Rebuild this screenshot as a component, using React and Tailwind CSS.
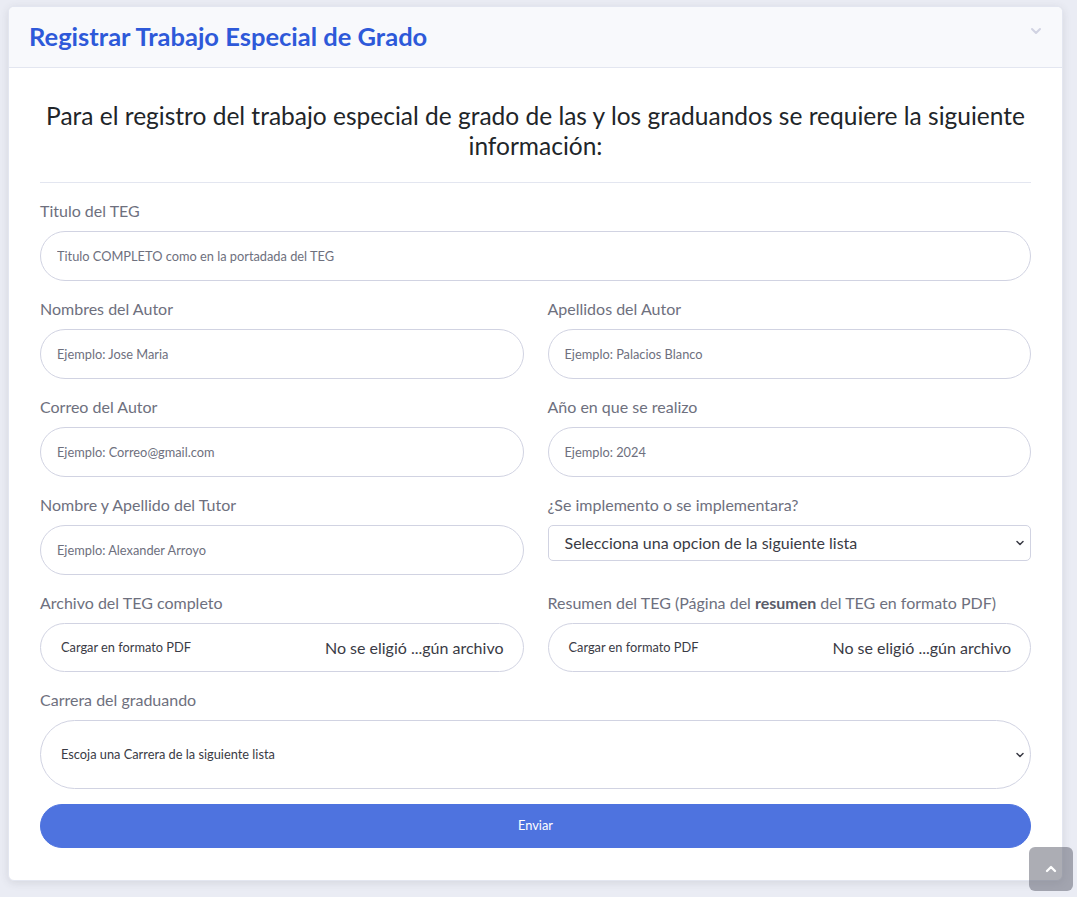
import { ChevronDown, ChevronUp } from 'lucide-react';

const font = { fontFamily: 'Lato, "Open Sans", Arial, sans-serif' };

const Label = ({ children }) => (
    <label className="block mb-2 text-base leading-6 text-[#6e707e]">{children}</label>
);

const TextInput = ({ placeholder }) => (
    <input
        type="text"
        placeholder={placeholder}
        className="block w-full h-[50px] px-4 rounded-full border border-[#d1d3e2] bg-white text-[12.8px] text-[#6e707e] placeholder:text-[#6e707e] outline-none"
    />
);

const FileInput = ({ label }) => (
    <div className="flex items-center justify-between h-[49px] pl-5 pr-[19px] rounded-full border border-[#d1d3e2] bg-white">
        <span className="text-[12.8px] text-[#3a3b45]">{label}</span>
        <span className="text-base text-[#3a3b45]">No se eligió ...gún archivo</span>
    </div>
);

const Field = ({ label, children }) => (
    <div className="mb-4">
        <Label>{label}</Label>
        {children}
    </div>
);

export default function App() {
    return (
        <div className="min-h-screen bg-[#eaecf4] pt-[6px] pb-4 pl-2 pr-[14px]" style={font}>
            <div className="bg-white rounded-[6px] border border-[#e3e6f0] shadow-[0_2px_8px_rgba(58,59,69,0.12)] overflow-hidden">
                <div className="flex items-center justify-between h-[61px] px-5 bg-[#f8f9fc] border-b border-[#e3e6f0]">
                    <h6 className="text-[25.5px] font-bold text-[#2e59d9] leading-none">Registrar Trabajo Especial de Grado</h6>
                    <ChevronDown className="w-4 h-4 text-[#d1d3e2] -mt-3 mr-[-2px]" strokeWidth={3} />
                </div>

                <div className="px-[31px] pt-[33px] pb-8">
                    <h4 className="text-center text-[24.5px] leading-[30px] text-[#212529]">
                        Para el registro del trabajo especial de grado de las y los graduandos se requiere la siguiente información:
                    </h4>
                    <hr className="mt-[21px] mb-4 border-t border-[#e3e6f0]" />

                    <Field label="Titulo del TEG">
                        <TextInput placeholder="Titulo COMPLETO como en la portadada del TEG" />
                    </Field>

                    <div className="grid grid-cols-2 gap-x-6">
                        <Field label="Nombres del Autor">
                            <TextInput placeholder="Ejemplo: Jose Maria" />
                        </Field>
                        <Field label="Apellidos del Autor">
                            <TextInput placeholder="Ejemplo: Palacios Blanco" />
                        </Field>
                        <Field label="Correo del Autor">
                            <TextInput placeholder="Ejemplo: Correo@gmail.com" />
                        </Field>
                        <Field label="Año en que se realizo">
                            <TextInput placeholder="Ejemplo: 2024" />
                        </Field>
                        <Field label="Nombre y Apellido del Tutor">
                            <TextInput placeholder="Ejemplo: Alexander Arroyo" />
                        </Field>
                        <Field label="¿Se implemento o se implementara?">
                            <div className="relative">
                                <div className="flex items-center h-[36px] pl-4 pr-8 rounded-[5px] border border-[#d1d3e2] bg-white text-base text-[#3a3b45]">
                                    Selecciona una opcion de la siguiente lista
                                </div>
                                <ChevronDown className="absolute right-[5px] top-[12px] w-3 h-3 text-[#3a3b45]" strokeWidth={3} />
                            </div>
                        </Field>
                        <Field label="Archivo del TEG completo">
                            <FileInput label="Cargar en formato PDF" />
                        </Field>
                        <Field label={<>Resumen del TEG (Página del <b className="text-[#5a5c69]">resumen</b> del TEG en formato PDF)</>}>
                            <FileInput label="Cargar en formato PDF" />
                        </Field>
                    </div>

                    <Field label="Carrera del graduando">
                        <div className="relative">
                            <div className="flex items-center h-[69px] pl-5 pr-8 rounded-full border border-[#d1d3e2] bg-white text-[12.8px] text-[#3a3b45]">
                                Escoja una Carrera de la siguiente lista
                            </div>
                            <ChevronDown className="absolute right-[5px] top-[29px] w-3 h-3 text-[#3a3b45]" strokeWidth={3} />
                        </div>
                    </Field>

                    <button className="block w-full h-[44px] -mt-px rounded-full bg-[#4e73df] border border-[#4e73df] text-white text-[12.8px]">
                        Enviar
                    </button>
                </div>
            </div>

            <a className="fixed right-1 bottom-[6px] flex items-center justify-center w-[44px] h-[44px] rounded-[6px] bg-[rgba(90,92,105,0.5)] text-white">
                <ChevronUp className="w-4 h-4" strokeWidth={3.5} />
            </a>
        </div>
    );
}
